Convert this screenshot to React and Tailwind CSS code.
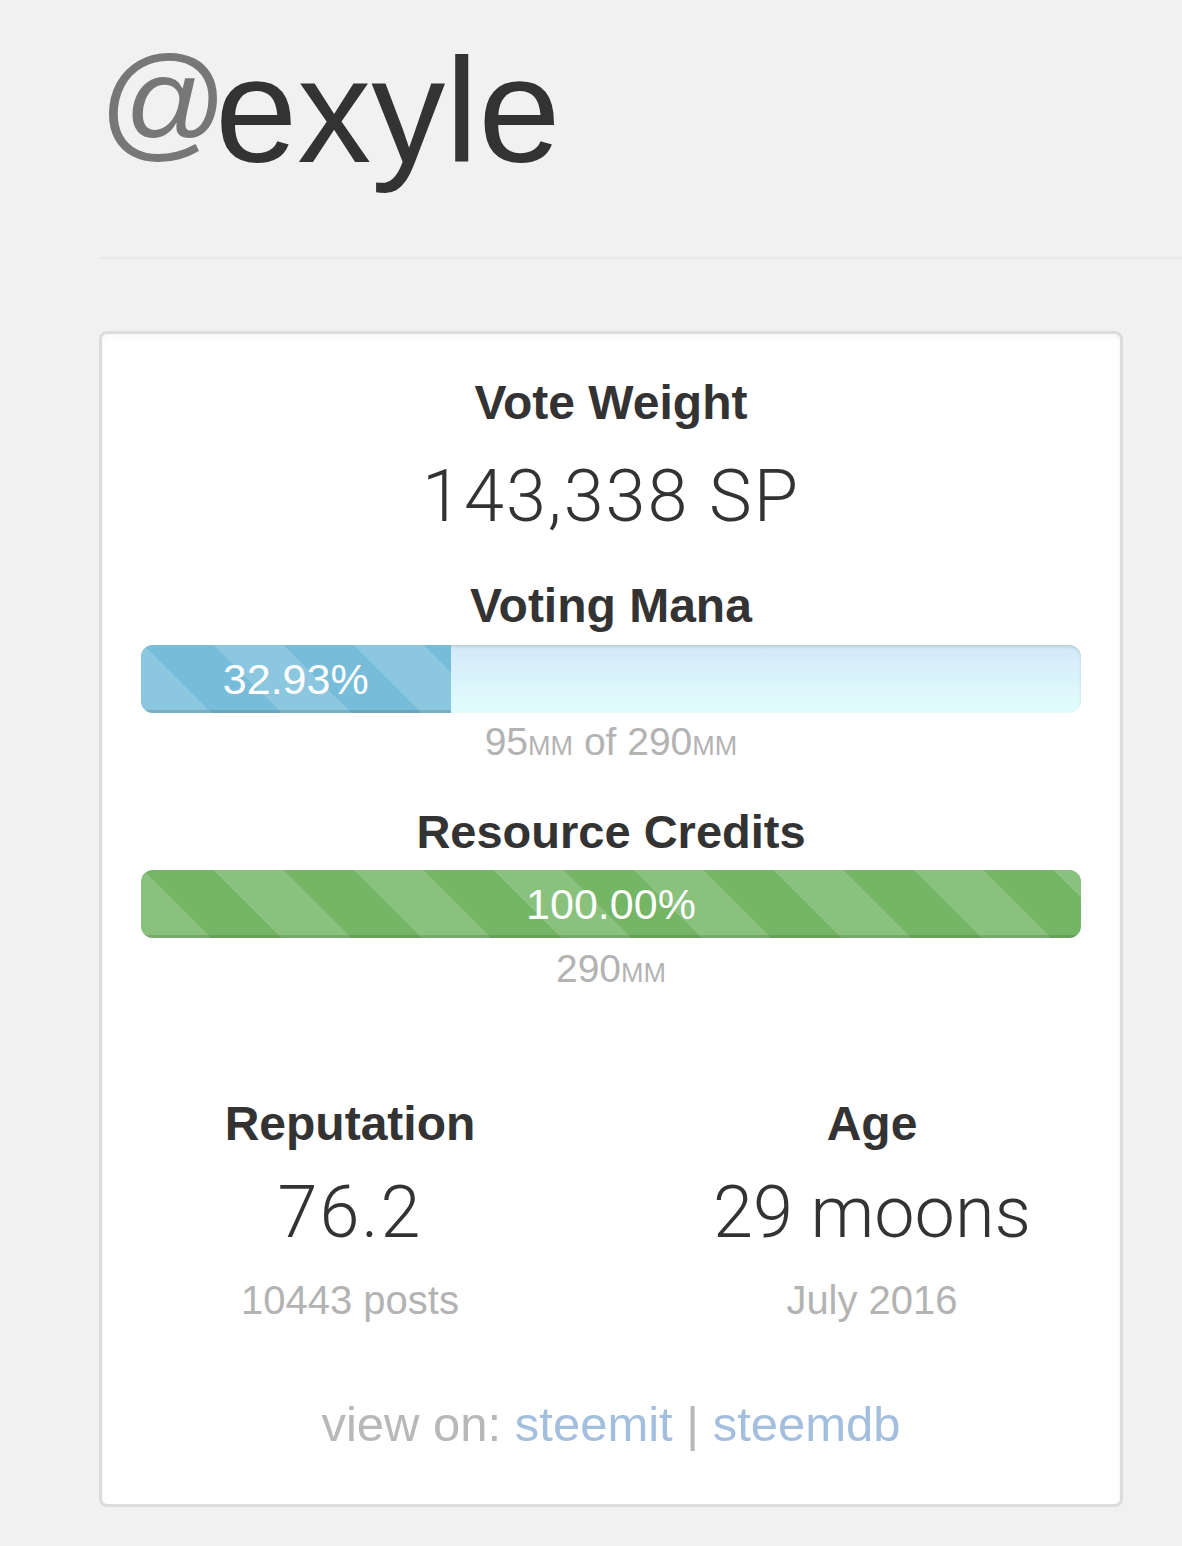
import React from 'react';

const sans = { fontFamily: '"Liberation Sans", Arial, sans-serif' };
const light = { fontFamily: 'Roboto, "Liberation Sans", sans-serif' };

// Striped bootstrap-style progress fill
function Bar({ percent, label, tone }) {
  const fill =
    tone === 'green'
      ? 'bg-[#74b666]'
      : 'bg-[#77bdd9]';
  return (
    <div className="h-[68px] w-full rounded-[12px] overflow-hidden flex bg-gradient-to-b from-[#d2eaf8] to-[#e2fdfe] shadow-[inset_0_2px_3px_rgba(0,0,0,0.12)]">
      <div
        className={`${fill} h-full flex items-center justify-center bg-[repeating-linear-gradient(45deg,rgba(255,255,255,0.15)_0_49.5px,transparent_49.5px_99px)] shadow-[inset_0_-3px_0_rgba(0,0,0,0.12)]`}
        style={{ width: `${percent}%` }}
      >
        <span className="text-white text-[43px] leading-none">{label}</span>
      </div>
    </div>
  );
}

function Mm() {
  return <span className="[font-variant-caps:small-caps]">mm</span>;
}

export default function App() {
  return (
    <div className="min-h-screen bg-[#f1f1f1] text-[#333] pl-[99px] pt-[37px] pb-[38px] overflow-hidden" style={sans}>
      <h1 className="text-[148px] leading-none font-normal">
        <span className="text-[#777] text-[127px] align-[17px] tracking-[-13px]">@</span>exyle
      </h1>
      <div className="mt-[72px] h-[2px] bg-[#e9e9e9] w-[1100px]" />

      <div className="mt-[72px] w-[1024px] bg-white border-[3px] border-[#dcdcdc] rounded-[8px] shadow-[inset_0_2px_6px_rgba(0,0,0,0.04)] px-[39px] pt-[45px] pb-[55px] text-center">
        <h3 className="text-[48px] leading-none font-bold">Vote Weight</h3>
        <div className="mt-[34px] text-[72px] leading-none font-light tracking-[2px]" style={light}>
          143,338 SP
        </div>

        <h3 className="mt-[49px] text-[48px] leading-none font-bold">Voting Mana</h3>
        <div className="mt-[15px]">
          <Bar percent={32.93} label="32.93%" tone="blue" />
        </div>
        <div className="mt-[9px] text-[39px] leading-none text-[#b3b3b3]">
          95<Mm /> of 290<Mm />
        </div>

        <h3 className="mt-[47px] text-[47px] leading-none font-bold">Resource Credits</h3>
        <div className="mt-[15px]">
          <Bar percent={100} label="100.00%" tone="green" />
        </div>
        <div className="mt-[11px] text-[39px] leading-none text-[#b3b3b3]">
          290<Mm />
        </div>

        <div className="mt-[112px] -mx-[52px] grid grid-cols-2">
          <div>
            <h3 className="text-[48px] leading-none font-bold">Reputation</h3>
            <div className="mt-[29px] text-[72px] leading-none font-light tracking-[2px]" style={light}>
              76.2
            </div>
            <div className="mt-[31px] text-[40px] leading-none text-[#b3b3b3]">10443 posts</div>
          </div>
          <div>
            <h3 className="text-[48px] leading-none font-bold">Age</h3>
            <div className="mt-[29px] text-[72px] leading-none font-light" style={light}>
              29 moons
            </div>
            <div className="mt-[31px] text-[40px] leading-none text-[#b3b3b3]">July 2016</div>
          </div>
        </div>

        <div className="mt-[80px] text-[49px] leading-none text-[#b8b8b8]">
          view on: <a className="text-[#a4bfde]">steemit</a> | <a className="text-[#a4bfde]">steemdb</a>
        </div>
      </div>
    </div>
  );
}
